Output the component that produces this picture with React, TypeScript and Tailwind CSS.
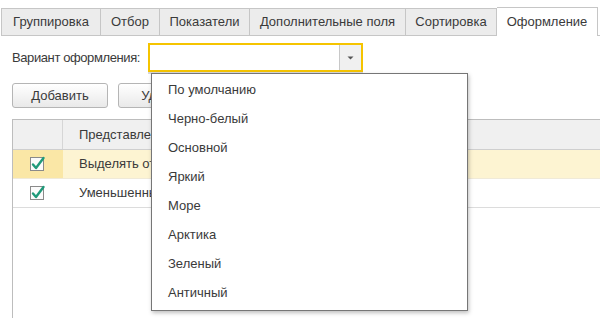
import React from 'react';

const tabs = [
  { label: 'Группировка', w: 'w-[100px]' },
  { label: 'Отбор', w: 'w-[59px]' },
  { label: 'Показатели', w: 'w-[90px]' },
  { label: 'Дополнительные поля', w: 'w-[156px]' },
  { label: 'Сортировка', w: 'w-[91px]' },
];

const variants = ['По умолчанию', 'Черно-белый', 'Основной', 'Яркий', 'Море', 'Арктика', 'Зеленый', 'Античный'];

function CheckBox() {
  return (
    <svg width="16" height="16" viewBox="0 0 16 16">
      <rect x="0.5" y="1.5" width="13" height="13" fill="#fbfbfb" stroke="#8a8a8a" />
      <path d="M3 8.5 L6 12 L13.5 2" fill="none" stroke="#1f9a7a" strokeWidth="2.4" strokeLinecap="round" strokeLinejoin="round" />
    </svg>
  );
}

export default function App() {
  return (
    <div className="relative w-[600px] h-[318px] overflow-hidden bg-white text-[13px] text-[#3a3a3a] font-['Liberation_Sans',Arial,sans-serif]">
      {/* Tabs */}
      <div className="flex pt-[7px] pl-[1px]">
        {tabs.map((t) => (
          <div
            key={t.label}
            className={`${t.w} h-[28px] mt-[1px] flex items-center justify-center bg-[#ececec] border border-[#c6c6c6] border-l-0 first:border-l`}
          >
            {t.label}
          </div>
        ))}
        <div className="w-[101px] h-[29px] flex items-center justify-center bg-white border border-[#c6c6c6] border-b-0 border-l-0">
          Оформление
        </div>
        <div className="flex-1 border-b border-[#c6c6c6]" />
      </div>

      {/* Content */}
      <div className="pl-[12px]">
        <div className="flex items-center mt-[7px] h-[29px]">
          <span className="w-[136px] whitespace-nowrap tracking-[-0.4px]">Вариант оформления:</span>
          <div className="w-[215px] h-[29px] flex border-2 border-[#f5c400] bg-white shadow-[0_2px_0_#d8d8d8]">
            <div className="flex-1" />
            <div className="w-[22px] bg-[#f0f0f0] border-l border-[#c8c8c8] flex items-center justify-center">
              <svg width="7" height="4" viewBox="0 0 7 4">
                <path d="M0.5 0.5 H6.5 L3.5 3.5 Z" fill="#555" />
              </svg>
            </div>
          </div>
        </div>

        <div className="flex gap-[10px] mt-[11px]">
          <button className="w-[96px] h-[25px] rounded-[3px] border border-[#b5b5b5] bg-gradient-to-b from-white to-[#e9e9e9] text-[#3a3a3a]">
            Добавить
          </button>
          <button className="w-[96px] h-[25px] rounded-[3px] border border-[#b5b5b5] bg-gradient-to-b from-white to-[#e9e9e9] text-[#3a3a3a]">
            Удалить
          </button>
        </div>

        {/* Table */}
        <div className="mt-[11px] h-[220px] border-l border-t border-[#bdbdbd]">
          <div className="flex h-[30px] bg-[#f0f0f0] border-b border-[#cfcfcf]">
            <div className="w-[50px] border-r border-[#d6d6d6]" />
            <div className="flex items-center pl-[16px]">Представление</div>
          </div>
          <div className="flex h-[29px] bg-[#fdf4d2] border-b border-[#f0ead8]">
            <div className="w-[50px] bg-[#fae7a6] flex items-center justify-center">
              <CheckBox />
            </div>
            <div className="flex items-center pl-[16px]">Выделять отрицательные</div>
          </div>
          <div className="flex h-[29px] border-b border-[#dcdcdc]">
            <div className="w-[50px] flex items-center justify-center">
              <CheckBox />
            </div>
            <div className="flex items-center pl-[16px]">Уменьшенный шрифт</div>
          </div>
        </div>
      </div>

      {/* Dropdown list */}
      <div className="absolute left-[151px] top-[73px] w-[317px] h-[238px] bg-white border border-[#767676] shadow-[1px_2px_4px_rgba(0,0,0,0.25)] pt-[1px]">
        {variants.map((v) => (
          <div key={v} className="h-[29px] flex items-center pl-[16px]">
            {v}
          </div>
        ))}
      </div>
    </div>
  );
}
